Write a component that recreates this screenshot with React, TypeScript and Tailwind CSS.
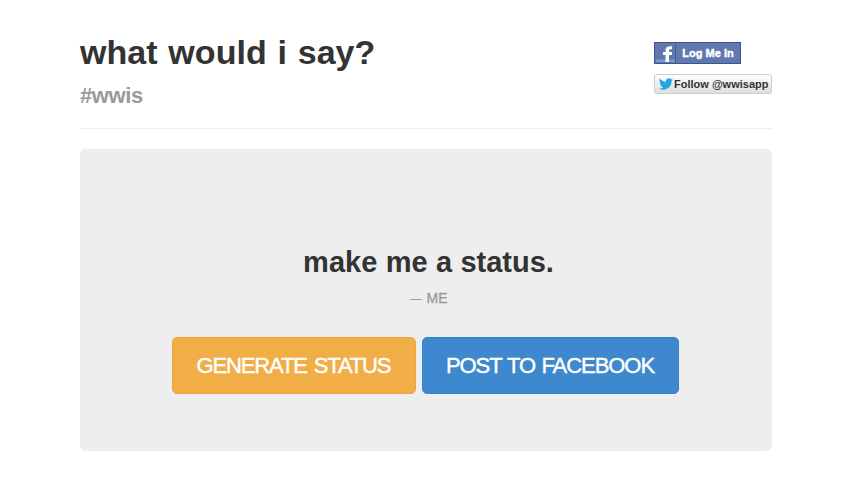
export default function App() {
  return (
    <div className="h-[478px] overflow-hidden bg-white pl-20 font-['Liberation_Sans',Arial,sans-serif] text-[#333333]">
      {/* Header */}
      <header className="flex h-[129px] w-[692px] justify-between border-b border-[#eeeeee] pt-[33px]">
        <div>
          <h1 className="text-[34px] font-bold leading-[38px] tracking-[0.05px] [word-spacing:1.2px]">what would i say?</h1>
          <h2 className="mt-[14px] text-[22px] font-bold leading-[22px] tracking-[-0.4px] text-[#999999]">#wwis</h2>
        </div>

        {/* Social buttons */}
        <div className="flex w-[118px] flex-col items-start pt-[9px]">
          <button className="flex h-[22px] w-[87px] border border-[#3b5591] bg-[#6078ad] text-[11px] font-bold text-white">
            <svg viewBox="0 0 21 20" className="h-5 w-[21px]">
              <path d="M1 16.500h19V19H1z" fill="#8297c4" />
              <path d="M20.500 0v20" stroke="#435c98" />
              <path d="M14 19v-7h3V9h-3V7.500q0-1.500 3-1.500V3.300q-6.500-.5-6.500 4V9H8v3h2.500v7z" fill="white" />
            </svg>
            <span className="flex-1 leading-[21px] [-webkit-text-stroke:0.4px_white]">Log Me In</span>
          </button>
          <button className="mt-[10px] flex h-5 w-[118px] items-center gap-px rounded-[3px] border border-[#cccccc] bg-linear-to-b from-white to-[#dedede] pl-[4px] text-[11px] font-bold">
            <svg viewBox="0 0 24 24" className="h-[14px] w-[14px] shrink-0">
              <path d="M24 4.600a10 10 0 0 1-2.800.8A5 5 0 0 0 23.300 2.700a10 10 0 0 1-3.100 1.200 4.900 4.900 0 0 0-8.400 4.500A14 14 0 0 1 1.700 3.200a4.900 4.900 0 0 0 1.500 6.500 5 5 0 0 1-2.200-.6 4.900 4.900 0 0 0 3.900 4.900 5 5 0 0 1-2.200.1 4.900 4.900 0 0 0 4.600 3.400A10 10 0 0 1 0 19.500a14 14 0 0 0 21.500-12.400A10 10 0 0 0 24 4.600z" fill="#22a6e8" />
            </svg>
            <span className="whitespace-nowrap">Follow @wwisapp</span>
          </button>
        </div>
      </header>

      {/* Status panel */}
      <main className="mt-5 flex h-[302px] w-[692px] flex-col items-center rounded-[5px] bg-[#eeeeee] pt-[93px]">
        <p className="pl-[5px] text-[29px] font-bold leading-[40px] [word-spacing:0.3px]">make me a status.</p>
        <p className="mt-[7px] flex items-center gap-[5px] pl-[6px] text-[14px] leading-[18px] text-[#999999] [-webkit-text-stroke:0.3px_#999999]">
          <span className="text-[11px]">—</span>
          <span>ME</span>
        </p>
        <div className="mt-[30px] flex gap-[6px] pr-[2px]">
          <button className="h-[57px] w-[244px] rounded-[5px] border border-[#eea83e] bg-[#f1ae46] text-[22px] tracking-[-1.15px] text-white [-webkit-text-stroke:0.4px_white] [word-spacing:2px]">
            GENERATE STATUS
          </button>
          <button className="h-[57px] w-[257px] rounded-[5px] border border-[#3a82c4] bg-[#3e88cd] text-[22px] tracking-[-1.05px] text-white [-webkit-text-stroke:0.4px_white] [word-spacing:1.2px]">
            POST TO FACEBOOK
          </button>
        </div>
      </main>
    </div>
  );
}
